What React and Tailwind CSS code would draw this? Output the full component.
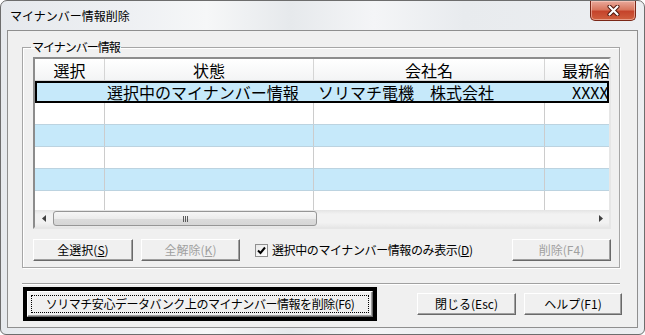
import { useState } from "react";

const jp = "font-['Noto_Sans_CJK_JP','Noto_Sans',sans-serif]";

function Btn({ children, disabled, className = "" }) {
  return (
    <button
      className={`h-[22px] flex items-center justify-center bg-[#f0f0f0] border-t border-l border-t-white border-l-white border-r border-b border-r-[#696969] border-b-[#696969] shadow-[inset_-1px_-1px_0_#a0a0a0] text-[12px] leading-none ${disabled ? "text-[#a0a0a0]" : "text-black"} ${className}`}
    >
      {children}
    </button>
  );
}

function ScrollArrow({ dir }) {
  return (
    <div className="w-[17px] h-full flex items-center justify-center">
      <svg width="4" height="7" viewBox="0 0 4 7">
        {dir === "left" ? (
          <path d="M4 0 L0 3.5 L4 7 Z" fill="#404040" />
        ) : (
          <path d="M0 0 L4 3.5 L0 7 Z" fill="#404040" />
        )}
      </svg>
    </div>
  );
}

export default function App() {
  const [onlySelected, setOnlySelected] = useState(true);

  // 0 = selected row, then alternating white / light blue
  const rows = [
    { bg: "bg-[#c6e9fa]", selected: true },
    { bg: "bg-white" },
    { bg: "bg-[#c6e9fa]" },
    { bg: "bg-white" },
    { bg: "bg-[#c6e9fa]" },
    { bg: "bg-white" },
  ];

  return (
    <div className={`w-[645px] h-[335px] bg-white ${jp}`}>
      <div className="w-[645px] h-[335px] flex flex-col rounded-t-[7px] rounded-b-[6px] border border-[#6d6d6d] bg-[linear-gradient(90deg,#e6e9ed_0%,#eef0f3_20%,#f6f7f8_32%,#e6e9ec_45%,#f4f5f7_58%,#e8ebee_72%,#eceef1_100%)]">
        {/* Title bar */}
        <div className="h-[29px] flex shrink-0">
          <div className="pl-[9px] pt-[7px] text-[12px] leading-[16px] text-black">マイナンバー情報削除</div>
          <div className="ml-auto mr-[8px] w-[46px] h-[20px] rounded-b-[5px] border border-t-0 border-[#7a2717] bg-[linear-gradient(to_bottom,#e9a99b_0%,#d8775f_45%,#c5442b_55%,#d0603f_100%)] shadow-[inset_0_0_0_1px_rgba(255,220,210,0.5)] flex items-center justify-center">
            <svg width="13" height="11" viewBox="0 0 13 11">
              <path d="M2.5 1.5 L10.5 9.5 M10.5 1.5 L2.5 9.5" stroke="#4a1208" strokeWidth="4" strokeLinecap="round" />
              <path d="M2.5 1.5 L10.5 9.5 M10.5 1.5 L2.5 9.5" stroke="#ffffff" strokeWidth="2.2" strokeLinecap="round" />
            </svg>
          </div>
        </div>

        {/* Client area */}
        <div className="mx-[6px] h-[298px] border border-[#8f8f8f] bg-[#f0f0f0] flex flex-col">
          <fieldset className="mt-[9px] ml-[14px] w-[598px] h-[228px] border border-[#a6a6a6] shadow-[inset_1px_1px_0_#ffffff,1px_1px_0_#ffffff] pl-[10px] pr-[8px] flex flex-col">
            <legend className="ml-[-2px] px-[1px] text-[12px] leading-[14px] tracking-[-1px] text-black">マイナンバー情報</legend>

            {/* Grid */}
            <div className="mt-[3px] h-[172px] w-[578px] border-2 border-t-[#8c8c8c] border-l-[#8c8c8c] border-r-[#e6e6e6] border-b-[#e6e6e6] bg-white flex flex-col overflow-hidden">
              <div className="h-[22px] shrink-0 flex border-b border-[#d5d5d5] bg-[linear-gradient(to_bottom,#ffffff,#f3f4f5)] text-[16px] leading-none text-black">
                <div className="w-[70px] border-r border-[#d5d5d5] flex items-center justify-center">選択</div>
                <div className="w-[209px] border-r border-[#d5d5d5] flex items-center justify-center">状態</div>
                <div className="w-[231px] border-r border-[#d5d5d5] flex items-center justify-center">会社名</div>
                <div className="flex-1 flex items-center pl-[17px] whitespace-nowrap overflow-hidden">最新給</div>
              </div>

              <div className="h-[129px] shrink-0 overflow-hidden flex flex-col">
                {rows.map((r, i) =>
                  r.selected ? (
                    <div
                      key={i}
                      className={`h-[22px] shrink-0 flex ${r.bg} shadow-[inset_0_0_0_2px_#000] text-[16px] leading-none text-black`}
                    >
                      <div className="w-[70px]" />
                      <div className="w-[209px] pl-[2px] flex items-center whitespace-nowrap">選択中のマイナンバー情報</div>
                      <div className="w-[231px] pl-[4px] flex items-center whitespace-nowrap">ソリマチ電機　株式会社</div>
                      <div className="flex-1 pl-[27px] flex items-center whitespace-nowrap overflow-hidden">XXXX</div>
                    </div>
                  ) : (
                    <div key={i} className={`h-[22px] shrink-0 flex ${r.bg} border-b border-[#bcd3e0]`}>
                      <div className="w-[70px] border-r border-[#cccccc]" />
                      <div className="w-[209px] border-r border-[#cccccc]" />
                      <div className="w-[231px] border-r border-[#cccccc]" />
                      <div className="flex-1" />
                    </div>
                  )
                )}
              </div>

              {/* Horizontal scrollbar */}
              <div className="h-[17px] shrink-0 flex bg-[linear-gradient(to_bottom,#e4e4e4,#f2f2f2_25%,#f2f2f2_75%,#e8e8e8)]">
                <ScrollArrow dir="left" />
                <div className="flex-1 flex items-center">
                  <div className="ml-[1px] w-[264px] h-[15px] rounded-[3px] border border-[#969696] bg-[linear-gradient(to_bottom,#f6f6f6,#ececec_50%,#dcdcdc_51%,#d6d6d6)] flex items-center justify-center gap-[1px]">
                    <div className="w-[1px] h-[6px] bg-[#5a5a5a]" />
                    <div className="w-[1px] h-[6px] bg-[#5a5a5a]" />
                    <div className="w-[1px] h-[6px] bg-[#5a5a5a]" />
                  </div>
                </div>
                <ScrollArrow dir="right" />
              </div>
            </div>

            {/* Buttons row */}
            <div className="mt-[10px] h-[22px] flex items-center">
              <Btn className="w-[100px]">
                全選択(<u>S</u>)
              </Btn>
              <Btn disabled className="ml-[8px] w-[99px]">
                全解除(<u>K</u>)
              </Btn>
              <label
                className="ml-[15px] flex items-center cursor-default"
                onClick={() => setOnlySelected(!onlySelected)}
              >
                <div className="w-[13px] h-[13px] border border-[#8f8f8f] bg-[linear-gradient(135deg,#e8e8e8,#ffffff)] flex items-center justify-center">
                  {onlySelected && (
                    <svg width="9" height="9" viewBox="0 0 9 9">
                      <path d="M1 4.5 L3.5 7 L8 1.5" stroke="#000" strokeWidth="2" fill="none" />
                    </svg>
                  )}
                </div>
                <span className="ml-[4px] text-[12px] leading-none tracking-[-0.4px] text-black">
                  選択中のマイナンバー情報のみ表示(<u>D</u>)
                </span>
              </label>
              <Btn disabled className="ml-auto w-[99px]">
                削除(F4)
              </Btn>
            </div>
          </fieldset>

          {/* Separator */}
          <div className="mt-[15px] ml-[14px] w-[598px] h-[2px] border-t border-[#a0a0a0] border-b border-b-white" />

          {/* Bottom buttons */}
          <div className="mt-[2px] h-[34px] flex items-center">
            <div className="ml-[15px] w-[354px] h-[34px] border-[4px] border-black flex">
              <button className="flex-1 bg-[#f0f0f0] border-t border-l border-t-white border-l-white border-r border-b border-r-[#696969] border-b-[#696969] shadow-[inset_-1px_-1px_0_#a0a0a0] p-[3px] flex">
                <div className="flex-1 border border-dotted border-black flex items-center justify-center text-[12px] leading-none tracking-[-0.45px] text-black whitespace-nowrap">
                  ソリマチ安心データバンク上のマイナンバー情報を削除(F6)
                </div>
              </button>
            </div>
            <Btn className="ml-[40px] w-[99px]">閉じる(Esc)</Btn>
            <Btn className="ml-[8px] w-[98px]">ヘルプ(F1)</Btn>
          </div>
        </div>
      </div>
    </div>
  );
}
